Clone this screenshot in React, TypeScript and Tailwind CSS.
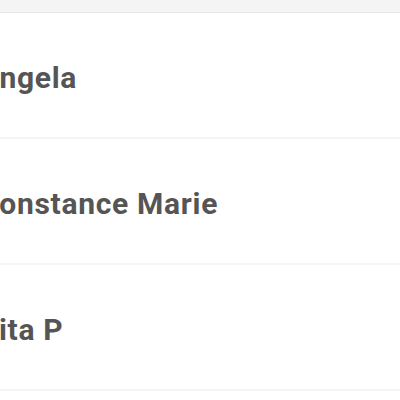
const names = ['Angela', 'Constance Marie', 'Rita P']

export default function App() {
  return (
    <div className="w-[400px] h-[400px] overflow-hidden bg-white font-['Roboto',sans-serif]">
      <div className="h-[13px] bg-[#f4f4f4] border-b border-[#e8e8e8]" />
      {names.map((name) => (
        <div
          key={name}
          className="h-[126px] flex items-center pt-[4px] border-b-2 border-[#f4f4f4] overflow-hidden"
        >
          <span className="ml-[-21px] text-[30px] tracking-[0.7px] font-bold text-[#555555] whitespace-nowrap">
            {name}
          </span>
        </div>
      ))}
    </div>
  )
}
